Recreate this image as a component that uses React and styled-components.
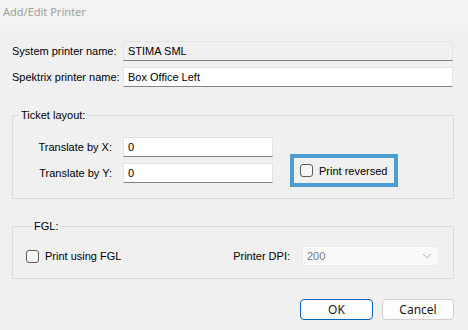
import React from 'react'
import styled, { createGlobalStyle } from 'styled-components'

const Global = createGlobalStyle`
  html, body {
    margin: 0;
    padding: 0;
    background: #f0f0f0;
  }
  body {
    width: 468px;
    height: 330px;
    overflow: hidden;
    font-family: 'Liberation Sans', Arial, sans-serif;
    font-size: 11px;
    color: #000;
  }
`

const Window = styled.div`
  width: 468px;
  height: 330px;
  background: #f0f0f0;
  display: flex;
  flex-direction: column;
`

const TitleBar = styled.div`
  height: 25px;
  background: #f3f3f3;
  color: #a0a0a0;
  font-family: 'Noto Sans', 'Open Sans', sans-serif;
  font-size: 11px;
  line-height: 24px;
  padding-left: 3px;
`

const Body = styled.div`
  padding: 16px 14px 0 12px;
  display: flex;
  flex-direction: column;
`

const Form = styled.div`
  display: grid;
  grid-template-columns: ${(p) => p.labelWidth || 100}px auto;
  column-gap: 11px;
  row-gap: 6px;
  align-items: center;
`

const Label = styled.label`
  text-align: right;
  white-space: nowrap;
  color: #000;
`

const TextBox = styled.input`
  box-sizing: border-box;
  width: ${(p) => p.w}px;
  height: 20px;
  margin: 0;
  padding: 0 4px;
  font-family: 'Liberation Sans', Arial, sans-serif;
  font-size: 11px;
  color: #000;
  background: ${(p) => (p.readOnly ? '#f0f0f0' : '#ffffff')};
  border: 1px solid #e3e3e3;
  border-bottom: 1px solid #838383;
  border-radius: 0;
  outline: none;
`

const Group = styled.fieldset`
  margin: ${(p) => p.top}px 0 0 0;
  padding: ${(p) => p.pad};
  border: 1px solid #dcdcdc;
  min-width: 0;
`

const Legend = styled.legend`
  margin-left: 6px;
  padding: 0 2px;
  line-height: 14px;
  font-size: 11px;
`

const TicketRow = styled.div`
  display: flex;
  align-items: flex-start;
`

const Highlight = styled.div`
  margin: 17px 0 0 17px;
  width: 108px;
  height: 33px;
  box-sizing: border-box;
  border: 4px solid #4a9ed3;
  display: flex;
  align-items: center;
  padding-left: 6px;
`

const CheckLabel = styled.label`
  display: flex;
  align-items: center;
  gap: 6px;
  white-space: nowrap;
`

const Box = styled.span`
  width: 13px;
  height: 13px;
  box-sizing: border-box;
  border: 1px solid #5c5c5c;
  border-radius: 3px;
  background: #f7f7f7;
`

const FglRow = styled.div`
  display: flex;
  align-items: center;
  height: 20px;
`

const DpiLabel = styled.span`
  margin-left: auto;
  margin-right: 12px;
`

const Select = styled.div`
  box-sizing: border-box;
  width: 137px;
  height: 20px;
  background: #f9f9f9;
  border: 1px solid #ececec;
  border-radius: 2px;
  display: flex;
  align-items: center;
  justify-content: space-between;
  padding: 0 6px 0 4px;
  color: #7a7a7a;
`

const Buttons = styled.div`
  margin-top: 20px;
  display: flex;
  justify-content: flex-end;
  gap: 9px;
`

const Button = styled.button`
  box-sizing: border-box;
  width: ${(p) => p.w}px;
  height: 21px;
  margin: 0;
  padding: 0;
  font-family: 'Noto Sans', 'Open Sans', sans-serif;
  font-size: 12px;
  color: #1a1a1a;
  background: #fdfdfd;
  border: 1px solid ${(p) => (p.primary ? '#0067c0' : '#d0d0d0')};
  border-radius: 4px;
`

const Chevron = () => (
  <svg width="10" height="6" viewBox="0 0 10 6">
    <path d="M1 1 L5 5 L9 1" fill="none" stroke="#b4b4b4" strokeWidth="1" />
  </svg>
)

export default function App() {
  return (
    <Window>
      <Global />
      <TitleBar>Add/Edit Printer</TitleBar>
      <Body>
        <Form>
          <Label>System printer name:</Label>
          <TextBox w={330} readOnly value="STIMA SML" />
          <Label>Spektrix printer name:</Label>
          <TextBox w={330} defaultValue="Box Office Left" />
        </Form>

        <Group top={21} pad="15px 0 11px 0">
          <Legend>Ticket layout:</Legend>
          <TicketRow>
            <Form labelWidth={99}>
              <Label>Translate by X:</Label>
              <TextBox w={150} defaultValue="0" />
              <Label>Translate by Y:</Label>
              <TextBox w={150} defaultValue="0" />
            </Form>
            <Highlight>
              <CheckLabel>
                <Box />
                Print reversed
              </CheckLabel>
            </Highlight>
          </TicketRow>
        </Group>

        <Group top={20} pad="13px 14px 12px 13px">
          <Legend>FGL:</Legend>
          <FglRow>
            <CheckLabel>
              <Box />
              Print using FGL
            </CheckLabel>
            <DpiLabel>Printer DPI:</DpiLabel>
            <Select>
              <span>200</span>
              <Chevron />
            </Select>
          </FglRow>
        </Group>

        <Buttons>
          <Button w={73} primary>OK</Button>
          <Button w={72}>Cancel</Button>
        </Buttons>
      </Body>
    </Window>
  )
}
